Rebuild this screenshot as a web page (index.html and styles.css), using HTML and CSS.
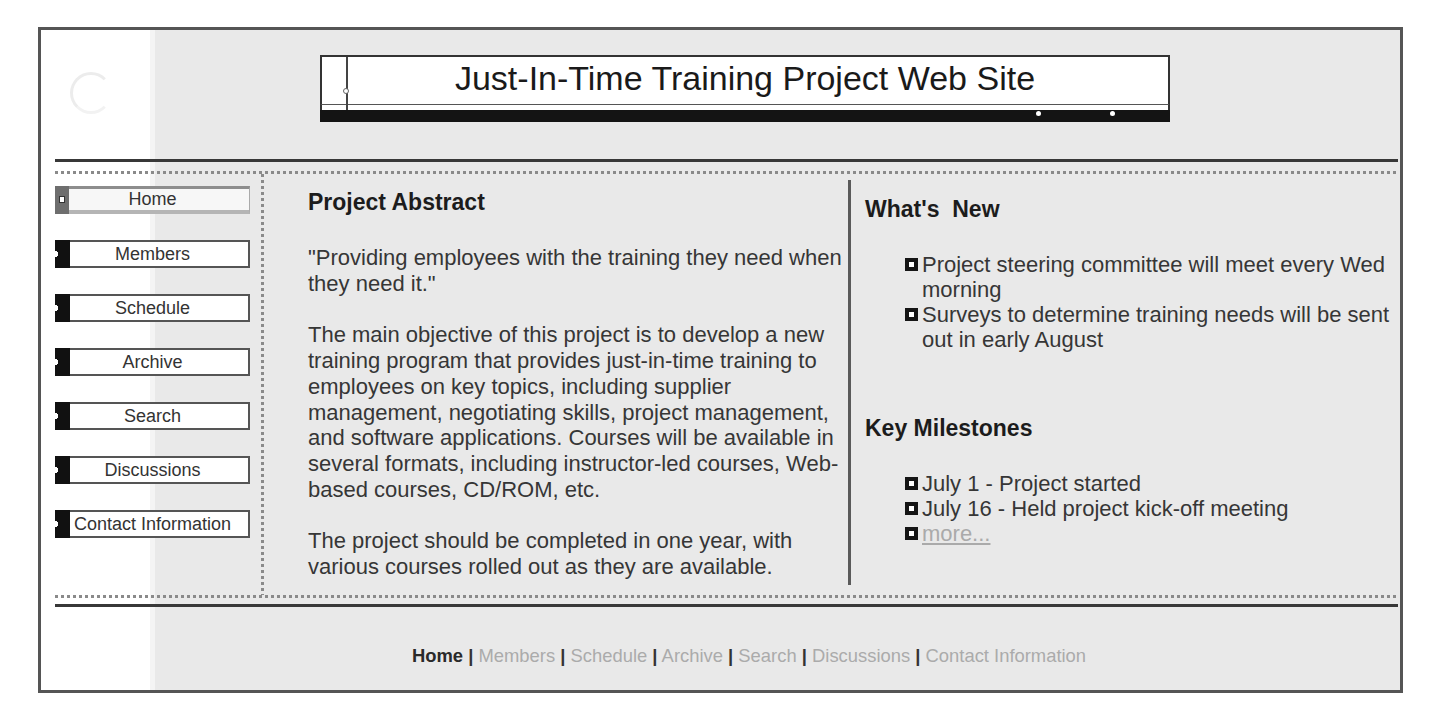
FILE: index.html
```html
<!DOCTYPE html>
<html>
<head>
<meta charset="utf-8">
<title>Just-In-Time Training Project Web Site</title>
<link rel="stylesheet" href="styles.css">
</head>
<body>
<div class="frame">
  <header class="header">
    <div class="ring"></div>
    <div class="title-box">
      <div class="title-face">
        <span class="tab-line"></span>
        <h1 class="title">Just-In-Time Training Project Web Site</h1>
      </div>
      <div class="title-rail"></div>
      <div class="title-bar"><span class="dot dot-a"></span><span class="dot dot-b"></span></div>
    </div>
  </header>
  <div class="body">
    <div class="rule-solid"></div>
    <div class="rule-dotted rule-top"></div>
    <div class="cols">
      <nav class="nav">
        <a class="btn btn-active">Home</a>
        <a class="btn">Members</a>
        <a class="btn">Schedule</a>
        <a class="btn">Archive</a>
        <a class="btn">Search</a>
        <a class="btn">Discussions</a>
        <a class="btn">Contact Information</a>
      </nav>
      <main class="main">
        <h2 class="heading">Project Abstract</h2>
        <p class="para">"Providing employees with the training they need when they need it."</p>
        <p class="para">The main objective of this project is to develop a new training program that provides just-in-time training to employees on key topics, including supplier management, negotiating skills, project management, and software applications. Courses will be available in several formats, including instructor-led courses, Web-based courses, CD/ROM, etc.</p>
        <p class="para">The project should be completed in one year, with various courses rolled out as they are available.</p>
      </main>
      <aside class="side">
        <h2 class="heading">What's&nbsp; New</h2>
        <ul class="list">
          <li class="item"><span class="bullet"></span><span>Project steering committee will meet every Wed morning</span></li>
          <li class="item"><span class="bullet"></span><span>Surveys to determine training needs will be sent out in early August</span></li>
        </ul>
        <h2 class="heading heading-km">Key Milestones</h2>
        <ul class="list">
          <li class="item"><span class="bullet"></span><span>July 1 - Project started</span></li>
          <li class="item"><span class="bullet"></span><span>July 16 - Held project kick-off meeting</span></li>
          <li class="item"><span class="bullet"></span><a class="more">more...</a></li>
        </ul>
      </aside>
    </div>
    <div class="rule-dotted"></div>
    <div class="rule-solid rule-bottom"></div>
  </div>
  <footer class="footer">
    <a class="flink flink-on">Home</a> <span class="sep">|</span> <a class="flink">Members</a> <span class="sep">|</span> <a class="flink">Schedule</a> <span class="sep">|</span> <a class="flink">Archive</a> <span class="sep">|</span> <a class="flink">Search</a> <span class="sep">|</span> <a class="flink">Discussions</a> <span class="sep">|</span> <a class="flink">Contact Information</a>
  </footer>
</div>
</body>
</html>
```
FILE: styles.css
```css
html, body {
  margin: 0;
  padding: 0;
  background: #ffffff;
}
body {
  font-family: "Liberation Sans", Arial, sans-serif;
  color: #333;
}
.frame {
  margin: 27px 0 0 38px;
  width: 1365px;
  height: 666px;
  box-sizing: border-box;
  border: 3px solid #555;
  background: linear-gradient(to right, #ffffff 0 109px, #f4f4f4 109px 114px, #e9e9e9 114px);
  display: flex;
  flex-direction: column;
}

/* header */
.header {
  height: 129px;
  display: flex;
  align-items: flex-start;
}
.ring {
  width: 36px;
  height: 36px;
  margin: 42px 0 0 29px;
  border-radius: 50%;
  border: 3px solid #ececec;
  border-right-color: transparent;
  border-bottom-color: #f2f2f2;
}
.title-box {
  margin: 25px 0 0 208px;
  width: 850px;
}
.title-face {
  position: relative;
  height: 49px;
  box-sizing: border-box;
  background: #fff;
  border: 2px solid #333;
  border-bottom: none;
}
.tab-line {
  position: absolute;
  left: 24px;
  top: 0;
  width: 2px;
  height: 56px;
  background: #444;
}
.tab-line::after {
  content: "";
  position: absolute;
  left: -3px;
  top: 31px;
  width: 6px;
  height: 6px;
  box-sizing: border-box;
  border-radius: 50%;
  border: 1px solid #666;
  background: #fff;
}
.title {
  margin: 0;
  font-size: 34px;
  font-weight: normal;
  line-height: 42px;
  text-align: center;
  color: #1a1a1a;
}
.title-rail {
  height: 6px;
  box-sizing: border-box;
  background: #fff;
  border-top: 1px solid #555;
  border-left: 2px solid #333;
  border-right: 2px solid #333;
}
.title-bar {
  position: relative;
  height: 12px;
  background: #141414;
}
.dot {
  position: absolute;
  top: 1px;
  width: 5px;
  height: 5px;
  border-radius: 50%;
  background: #fff;
}
.dot-a { left: 716px; }
.dot-b { left: 790px; }

/* body */
.body {
  padding: 0 2px 0 14px;
}
.rule-solid {
  height: 3px;
  background: #383838;
}
.rule-dotted {
  height: 3px;
  background: repeating-linear-gradient(to right, #8a8a8a 0 3px, transparent 3px 6px);
}
.rule-top {
  margin-top: 9px;
}
.rule-bottom {
  margin-top: 6px;
}
.cols {
  height: 421px;
  display: flex;
}

/* nav */
.nav {
  width: 209px;
  box-sizing: border-box;
  padding-top: 12px;
  background: repeating-linear-gradient(to bottom, #8a8a8a 0 3px, transparent 3px 6px) right top / 3px 100% no-repeat;
  display: flex;
  flex-direction: column;
  gap: 26px;
}
.btn {
  position: relative;
  display: block;
  width: 195px;
  height: 28px;
  box-sizing: border-box;
  border: 2px solid #555;
  background: #fff;
  font-size: 18px;
  line-height: 24px;
  text-align: center;
  color: #333;
}
.btn::before {
  content: "";
  position: absolute;
  left: -2px;
  top: -2px;
  width: 15px;
  height: 28px;
  background: radial-gradient(circle at 0 50%, #fff 0 3px, #111 3.5px);
}
.btn-active {
  border: 1px solid #aaa;
  border-top: 3px solid #8d8d8d;
  border-bottom: 4px solid #b5b5b5;
  line-height: 20px;
  background: #f7f7f7;
}
.btn-active::before {
  left: -1px;
  top: -3px;
  width: 14px;
  background: #6e6e6e;
}
.btn-active::after {
  content: "";
  position: absolute;
  left: 3px;
  top: 7px;
  width: 4px;
  height: 5px;
  border: 1px solid #333;
  background: #fff;
}

/* main */
.main {
  width: 587px;
  box-sizing: border-box;
  margin: 6px 0 10px;
  padding: 9px 0 0 44px;
  border-right: 3px solid #5a5a5a;
}
.heading {
  margin: 0;
  font-size: 23px;
  line-height: 27px;
  font-weight: bold;
  color: #1c1c1c;
}
.para {
  margin: 29px 0 0;
  font-size: 22px;
  line-height: 25.9px;
  color: #363636;
}
.para + .para {
  margin-top: 25px;
}

/* side */
.side {
  flex: 1;
  padding: 22px 0 0 14px;
}
.list {
  list-style: none;
  margin: 29px 0 0;
  padding: 0 0 0 40px;
  font-size: 22px;
  line-height: 25px;
  color: #363636;
}
.item {
  display: flex;
  align-items: flex-start;
}
.bullet {
  flex: none;
  width: 13px;
  height: 13px;
  box-sizing: border-box;
  border: 4px solid #151515;
  background: #fff;
  margin: 6px 4px 0 0;
}
.heading-km {
  margin-top: 63px;
}
.more {
  color: #aaa;
  text-decoration: underline;
}

/* footer */
.footer {
  padding: 38px 0 0 57px;
  text-align: center;
  font-size: 18.4px;
  line-height: 21px;
  color: #aaa;
}
.flink {
  color: #ababab;
}
.flink-on {
  color: #2a2a2a;
  font-weight: bold;
}
.sep {
  color: #333;
  font-weight: bold;
}
```
